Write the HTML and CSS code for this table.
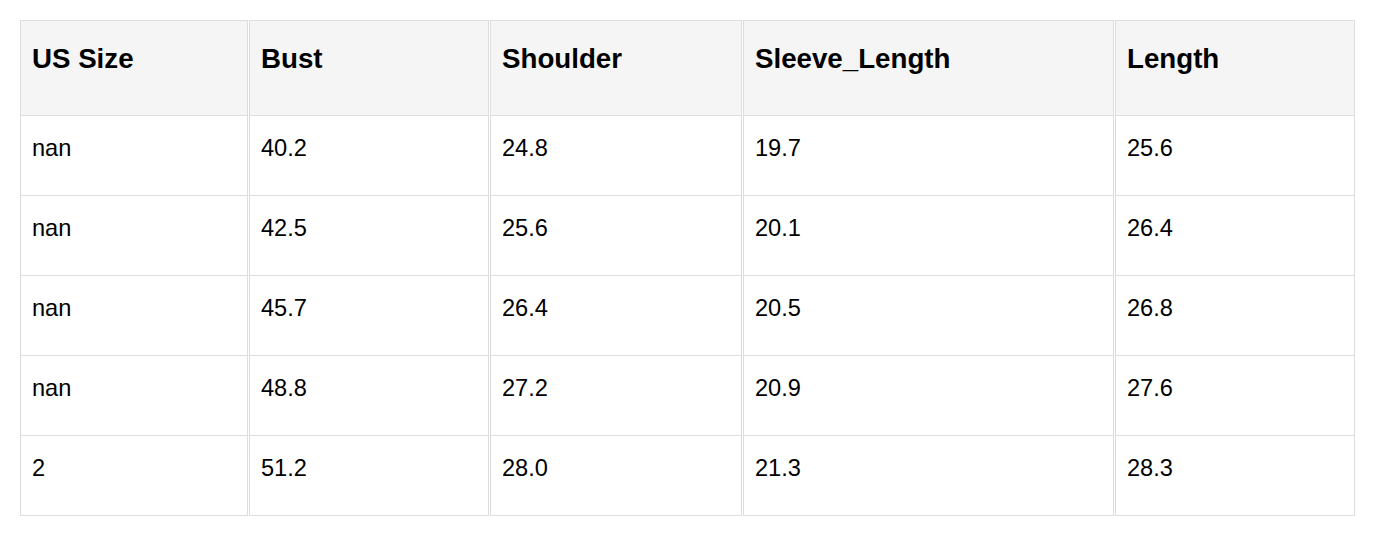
FILE: index.html
```html
<!DOCTYPE html>
<html>
<head>
<meta charset="utf-8">
<link rel="stylesheet" href="styles.css">
</head>
<body>
<div class="wrap">
<table class="size-table">
  <thead>
    <tr>
      <th class="c1">US Size</th>
      <th class="c2">Bust</th>
      <th class="c3">Shoulder</th>
      <th class="c4">Sleeve_Length</th>
      <th class="c5">Length</th>
    </tr>
  </thead>
  <tbody>
    <tr><td>nan</td><td>40.2</td><td>24.8</td><td>19.7</td><td>25.6</td></tr>
    <tr><td>nan</td><td>42.5</td><td>25.6</td><td>20.1</td><td>26.4</td></tr>
    <tr><td>nan</td><td>45.7</td><td>26.4</td><td>20.5</td><td>26.8</td></tr>
    <tr><td>nan</td><td>48.8</td><td>27.2</td><td>20.9</td><td>27.6</td></tr>
    <tr><td>2</td><td>51.2</td><td>28.0</td><td>21.3</td><td>28.3</td></tr>
  </tbody>
</table>
</div>
</body>
</html>
```
FILE: styles.css
```css
html, body {
  margin: 0;
  padding: 0;
  background: #ffffff;
}

.wrap {
  padding: 20px 0 0 19px;
}

.size-table {
  table-layout: fixed;
  width: 1337px;
  border-collapse: separate;
  border-spacing: 1px 0;
  font-family: "Liberation Sans", Arial, sans-serif;
  color: #000;
}

.size-table th,
.size-table td {
  box-sizing: border-box;
  border-left: 1px solid #dddddd;
  border-right: 1px solid #dddddd;
  border-bottom: 1px solid #dddddd;
  text-align: left;
  vertical-align: top;
  white-space: nowrap;
}

.size-table th {
  background: #f5f5f5;
  border-top: 1px solid #dddddd;
  font-weight: bold;
  font-size: 27.7px;
  line-height: 34px;
  padding: 21px 11px 39px 11px;
}

.size-table td {
  font-size: 23.6px;
  line-height: 30px;
  padding: 17px 11px 32px 11px;
}

.c1 { width: 228px; }
.c2 { width: 240px; }
.c3 { width: 252px; }
.c4 { width: 371px; }
.c5 { width: 240px; }
```
